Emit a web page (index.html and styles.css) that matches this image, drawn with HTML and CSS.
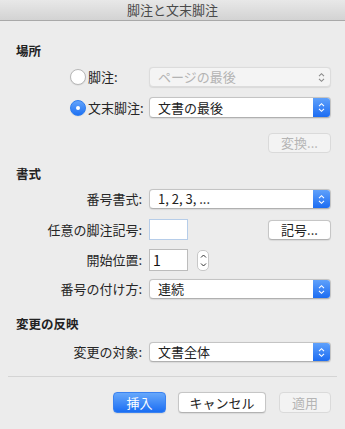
FILE: index.html
```html
<!DOCTYPE html>
<html lang="ja">
<head>
<meta charset="utf-8">
<link rel="stylesheet" href="styles.css">
</head>
<body>
<div class="win">
  <div class="titlebar">脚注と文末脚注</div>
  <div class="content">
    <div class="heading h1">場所</div>

    <div class="row r-radio1">
      <div class="lbl radiolbl"><span class="radio"></span><span>脚注:</span></div>
      <div class="select disabled"><span class="val">ページの最後</span>
        <span class="arrows"><svg width="7" height="11" viewBox="0 0 7 11"><path d="M1 4.2L3.5 1.7L6 4.2M1 6.8L3.5 9.3L6 6.8" fill="none" stroke="currentColor" stroke-width="1.1"/></svg></span>
      </div>
    </div>

    <div class="row r-radio2">
      <div class="lbl radiolbl"><span class="radio on"></span><span>文末脚注:</span></div>
      <div class="select"><span class="val">文書の最後</span>
        <span class="arrows"><svg width="7" height="11" viewBox="0 0 7 11"><path d="M1 4.2L3.5 1.7L6 4.2M1 6.8L3.5 9.3L6 6.8" fill="none" stroke="currentColor" stroke-width="1.1"/></svg></span>
      </div>
    </div>

    <div class="row r-convert">
      <div></div>
      <div class="right"><button class="btn disabled w63">変換...</button></div>
    </div>

    <div class="heading h2">書式</div>

    <div class="row r-fmt">
      <div class="lbl">番号書式:</div>
      <div class="select"><span class="val">1, 2, 3, ...</span>
        <span class="arrows"><svg width="7" height="11" viewBox="0 0 7 11"><path d="M1 4.2L3.5 1.7L6 4.2M1 6.8L3.5 9.3L6 6.8" fill="none" stroke="currentColor" stroke-width="1.1"/></svg></span>
      </div>
    </div>

    <div class="row r-custom">
      <div class="lbl">任意の脚注記号:</div>
      <div class="split">
        <div class="input focus"></div>
        <button class="btn w63">記号...</button>
      </div>
    </div>

    <div class="row r-start">
      <div class="lbl">開始位置:</div>
      <div class="inline">
        <div class="input">1</div>
        <div class="stepper"><svg width="7" height="17" viewBox="0 0 7 17"><path d="M1 5.5L3.5 3L6 5.5M1 11.5L3.5 14L6 11.5" fill="none" stroke="#333" stroke-width="1"/></svg></div>
      </div>
    </div>

    <div class="row r-num">
      <div class="lbl">番号の付け方:</div>
      <div class="select"><span class="val">連続</span>
        <span class="arrows"><svg width="7" height="11" viewBox="0 0 7 11"><path d="M1 4.2L3.5 1.7L6 4.2M1 6.8L3.5 9.3L6 6.8" fill="none" stroke="currentColor" stroke-width="1.1"/></svg></span>
      </div>
    </div>

    <div class="heading h3">変更の反映</div>

    <div class="row r-apply">
      <div class="lbl">変更の対象:</div>
      <div class="select"><span class="val">文書全体</span>
        <span class="arrows"><svg width="7" height="11" viewBox="0 0 7 11"><path d="M1 4.2L3.5 1.7L6 4.2M1 6.8L3.5 9.3L6 6.8" fill="none" stroke="currentColor" stroke-width="1.1"/></svg></span>
      </div>
    </div>

    <div class="sep"></div>

    <div class="buttons">
      <button class="btn primary w53">挿入</button>
      <button class="btn w88">キャンセル</button>
      <button class="btn disabled w52">適用</button>
    </div>
  </div>
</div>
</body>
</html>
```

FILE: styles.css
```css
* { box-sizing: border-box; }
html, body { margin: 0; padding: 0; }
body {
  width: 345px;
  height: 429px;
  background: #ececec;
  font-family: "Noto Sans CJK JP", "Noto Sans", sans-serif;
  font-size: 13px;
  color: #262626;
  overflow: hidden;
}
.titlebar {
  height: 21px;
  background: linear-gradient(#e8e8e8, #d3d3d3);
  border-bottom: 1px solid #a9a9a9;
  text-align: center;
  font-size: 13px;
  line-height: 20px;
  color: #4a4a4a;
}
.content { padding: 0 14px 0 0; }
.heading {
  padding-left: 16px;
  font-weight: bold;
  font-size: 12.5px;
  line-height: 16px;
  height: 16px;
  color: #222;
}
.h1 { margin-top: 22px; }
.h2 { margin-top: 13px; }
.h3 { margin-top: 17px; }

.row {
  display: grid;
  grid-template-columns: 142px 1fr;
  column-gap: 7px;
  align-items: center;
}
.lbl {
  text-align: right;
  display: flex;
  justify-content: flex-end;
  align-items: center;
  white-space: nowrap;
  line-height: 16px;
}
.lbl.radiolbl {
  justify-content: flex-start;
  padding-left: 70px;
}
.r-radio1 { margin-top: 8px; height: 20px; }
.r-radio2 { margin-top: 10px; height: 21px; }
.r-convert { margin-top: 15px; height: 20px; }
.r-fmt { margin-top: 7px; height: 20px; }
.r-custom { margin-top: 10px; height: 21px; }
.r-start { margin-top: 9px; height: 22px; }
.r-num { margin-top: 8px; height: 20px; }
.r-apply { margin-top: 10px; height: 20px; }

.radio {
  flex: none;
  width: 16px; height: 16px;
  border-radius: 50%;
  border: 1px solid #b8b8b8;
  background: #fff;
  margin-right: 2px;
  position: relative;
  box-shadow: 0 0.5px 1px rgba(0,0,0,0.1);
}
.radio.on {
  border: 1px solid #2c7cf0;
  background: linear-gradient(#62a3fb, #1f72f3);
}
.radio.on::after {
  content: "";
  position: absolute;
  left: 5px; top: 5px;
  width: 4px; height: 4px;
  border-radius: 50%;
  background: #fff;
}

.select {
  height: 100%;
  background: #fff;
  border: 1px solid #c4c4c4;
  border-bottom-color: #b0b0b0;
  border-radius: 4px;
  display: flex;
  align-items: center;
  justify-content: space-between;
  overflow: hidden;
  box-shadow: 0 0.5px 1px rgba(0,0,0,0.08);
}
.select .val { padding-left: 8px; line-height: 16px; color: #222; }
.select .arrows {
  width: 17px;
  align-self: stretch;
  display: flex;
  align-items: center;
  justify-content: center;
  color: #fff;
  background: linear-gradient(#5fa1fb, #1c6cf2);
}
.select.disabled {
  background: #f4f4f4;
  border-color: #dcdcdc;
}
.select.disabled .val { color: #b3b3b3; }
.select.disabled .arrows { background: transparent; color: #8a8a8a; }

.right { display: flex; justify-content: flex-end; height: 100%; }
.split { display: flex; justify-content: space-between; align-items: center; height: 100%; }
.inline { display: flex; align-items: center; gap: 9px; height: 100%; }

.btn {
  font-family: inherit;
  font-size: 13px;
  height: 20px;
  padding: 0;
  background: #fff;
  border: 1px solid #c6c6c6;
  border-bottom-color: #b2b2b2;
  border-radius: 4px;
  color: #222;
  line-height: 16px;
  box-shadow: 0 0.5px 1px rgba(0,0,0,0.08);
}
.btn.disabled {
  background: #f3f3f3;
  border-color: #dadada;
  color: #b5b5b5;
  box-shadow: none;
}
.btn.primary {
  background: linear-gradient(#67a8fb, #1b6ef3);
  border-color: #3b82f0;
  color: #fff;
}
.w63 { width: 63px; }
.w53 { width: 53px; }
.w88 { width: 88px; }
.w52 { width: 52px; }

.input {
  width: 39px;
  height: 100%;
  background: #fff;
  border: 1px solid #bcbcbc;
  padding-left: 3px;
  line-height: 20px;
  font-size: 14px;
  color: #111;
}
.input.focus { border-color: #b6cde9; }
.stepper {
  width: 12px;
  height: 21px;
  background: #fff;
  border: 1px solid #c8c8c8;
  border-radius: 5px;
  display: flex;
  align-items: center;
  justify-content: center;
}

.sep {
  margin: 14px 0 0 8px;
  width: 329px;
  height: 1px;
  background: #d4d4d4;
}
.buttons {
  margin-top: 15px;
  display: flex;
  justify-content: flex-end;
  gap: 12px;
}
.buttons .btn { height: 21px; }
.buttons .btn.w88 + .btn { margin-left: 1px; }
```
